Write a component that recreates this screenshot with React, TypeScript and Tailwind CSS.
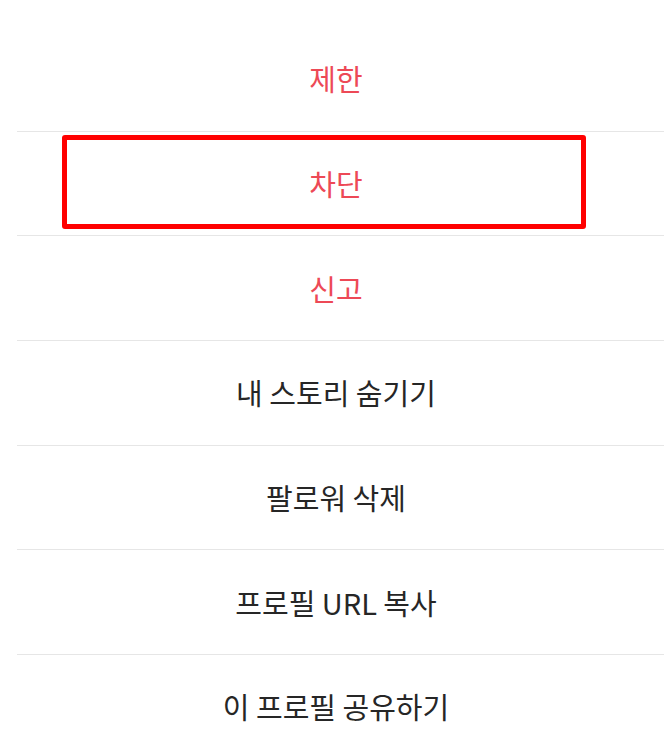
const items = [
  { label: '제한', danger: true },
  { label: '차단', danger: true },
  { label: '신고', danger: true },
  { label: '내 스토리 숨기기', danger: false },
  { label: '팔로워 삭제', danger: false },
  { label: '프로필 URL 복사', danger: false },
  { label: '이 프로필 공유하기', danger: false },
];

export default function App() {
  return (
    <div
      className="relative w-[664px] h-[748px] overflow-hidden bg-white"
      style={{ fontFamily: '"Noto Sans CJK KR", "Noto Sans", sans-serif' }}
    >
      <ul className="pt-[27px] pl-[17px]">
        {items.map((item) => (
          <li
            key={item.label}
            className="h-[104.7px] flex items-center justify-center pr-[9px] border-b border-[#e6e6e6]"
          >
            <span
              className={`text-[29px] leading-none ${
                item.danger ? 'text-[#ed4956]' : 'text-[#262626]'
              }`}
            >
              {item.label}
            </span>
          </li>
        ))}
      </ul>

      {/* annotation box over 차단 */}
      <div className="absolute left-[62px] top-[135px] w-[524px] h-[94px] border-[5px] border-[#ff0000] rounded-[3px]" />
    </div>
  );
}
